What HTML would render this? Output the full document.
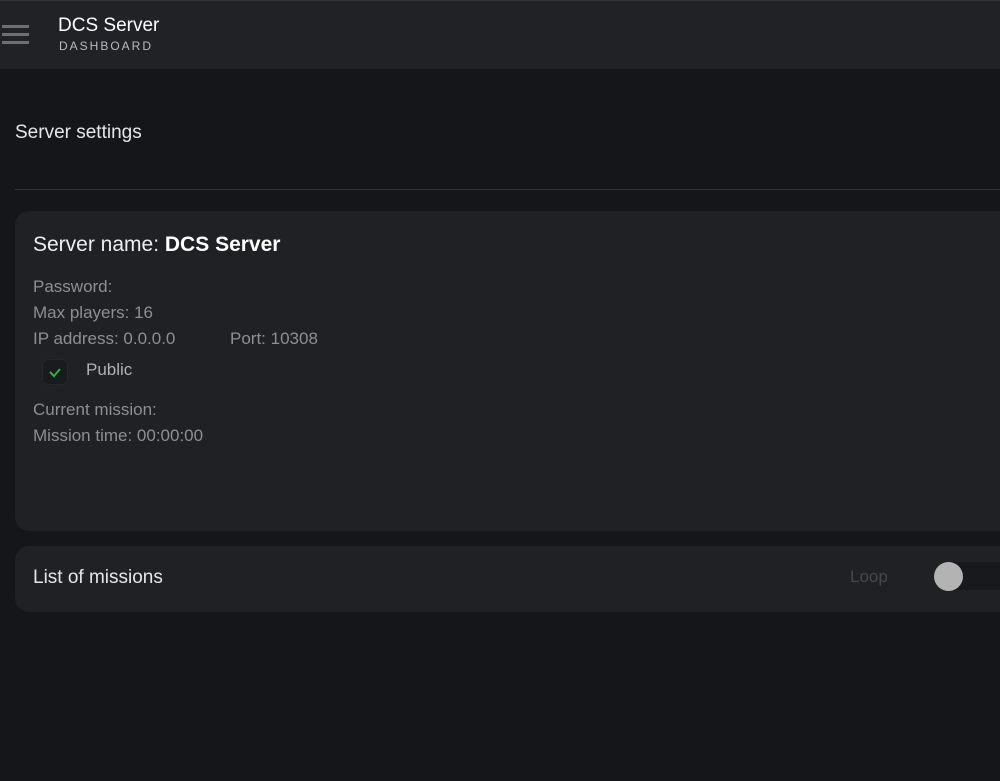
<!DOCTYPE html>
<html><head><style>
body{margin:0;width:1000px;height:781px;background:#151619;font-family:"Liberation Sans",sans-serif;overflow:hidden;position:relative}
.top{position:absolute;left:0;top:0;width:1000px;height:68px;background:#202225;border-top:1px solid #333}
.bar{position:absolute;left:2px;width:27px;height:3px;background:#6b6e73}
.t1{position:absolute;left:58px;top:14px;font-size:19px;color:#fff}
.t2{position:absolute;left:59px;top:38px;font-size:12px;letter-spacing:2px;color:#b7bcc4}
.h{position:absolute;left:15px;top:122px;font-size:19px;color:#e6e6e6}
.hr{position:absolute;left:15px;top:189px;width:985px;height:1px;background:#33363a}
.card{position:absolute;left:15px;background:#1f2124;border-radius:14px 0 0 14px;width:1000px}
.g{color:#8c8f93;font-size:17px;position:absolute;left:33px}
</style></head><body>
<div class="top">
<div class="bar" style="top:24px"></div><div class="bar" style="top:32px"></div><div class="bar" style="top:40px"></div>
<div class="t1">DCS Server</div><div class="t2">DASHBOARD</div></div>
<div class="h">Server settings</div>
<div class="hr"></div>
<div class="card" style="top:211px;height:320px"></div>
<div style="position:absolute;left:33px;top:233px;font-size:21px;color:#eee">Server name: <b style="color:#fff">DCS Server</b></div>
<div class="g" style="top:277px">Password:</div>
<div class="g" style="top:303px">Max players: 16</div>
<div class="g" style="top:329px">IP address: 0.0.0.0</div>
<div class="g" style="top:329px;left:230px">Port: 10308</div>
<div style="position:absolute;left:42px;top:359px;width:24px;height:24px;border-radius:6px;background:#191b1d;border:1px solid #25272a"><svg width="24" height="24"><path d="M7 12l4 4 6-7" stroke="#2db04a" stroke-width="2" fill="none"/></svg></div>
<div class="g" style="top:360px;left:86px;color:#aeb1b5">Public</div>
<div class="g" style="top:400px">Current mission:</div>
<div class="g" style="top:426px">Mission time: 00:00:00</div>
<div class="card" style="top:546px;height:66px"></div>
<div style="position:absolute;left:33px;top:567px;font-size:19px;color:#e6e6e6">List of missions</div>
<div style="position:absolute;left:850px;top:567px;font-size:17px;color:#45484c">Loop</div>
<div style="position:absolute;left:935px;top:562px;width:80px;height:28px;border-radius:14px;background:#18191b"></div>
<div style="position:absolute;left:934px;top:562px;width:29px;height:29px;border-radius:50%;background:#b3b3b3"></div>
</body></html>
